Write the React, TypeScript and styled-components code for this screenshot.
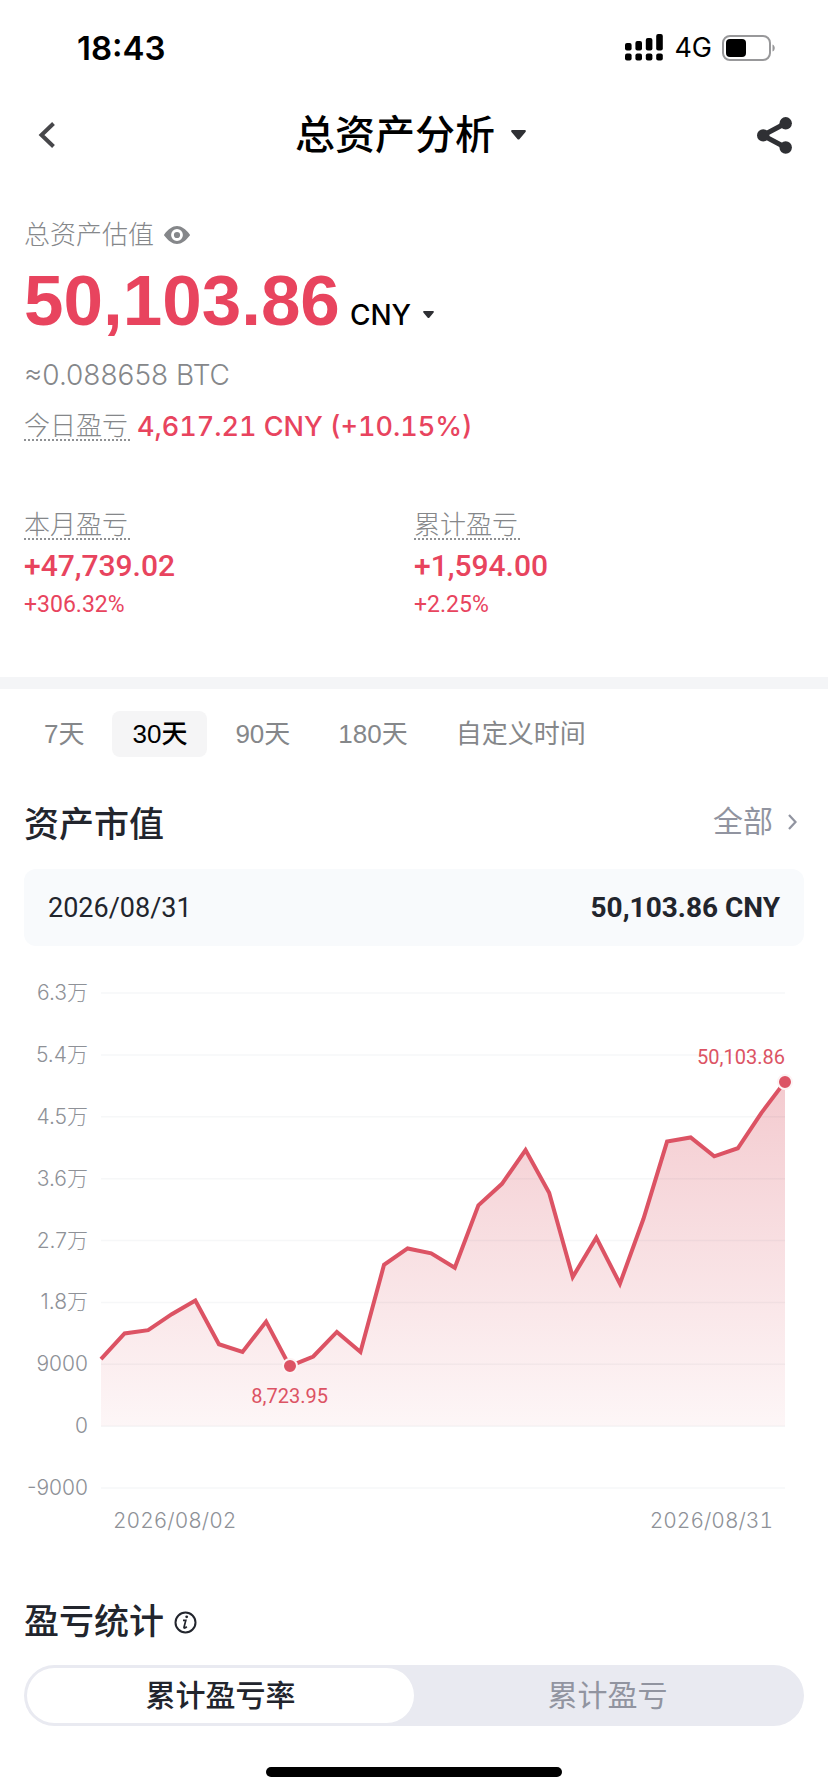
import React from "react";
import styled, { createGlobalStyle, css } from "styled-components";

const cjk = `"Noto Sans CJK SC", sans-serif`;
const sans = `"Liberation Sans", ${cjk}`;
const inter = `Inter, ${cjk}`;
const roboto = `Roboto, ${cjk}`;

const color = {
  text: "#22252d",
  muted: "#85878a",
  axis: "#8e9197",
  red: "#e8445e",
  line: "#dc5364",
};

const GlobalStyle = createGlobalStyle`
  * { box-sizing: border-box; }
  body { margin: 0; background: #fff; color: ${color.text}; font-family: ${sans}; }
  button { margin: 0; padding: 0; border: 0; background: none; font: inherit; color: inherit; cursor: pointer; }
  h1, h2, p, dl, dt, dd { margin: 0; }
  svg { display: block; flex: none; }
`;

const Page = styled.div`
  display: flex;
  flex-direction: column;
  min-height: 100vh;
`;

const StatusBar = styled.header`
  display: flex;
  align-items: center;
  justify-content: space-between;
  height: 95px;
  padding: 0 52px 0 77px;
  color: #000;
  font-family: ${inter};
`;

const Clock = styled.time`
  font-size: 33px;
  font-weight: 600;
  line-height: 40px;
`;

const StatusIcons = styled.div`
  display: flex;
  align-items: center;
  gap: 10px;
  font-size: 27px;
  font-weight: 400;
  line-height: 40px;
`;

const NavBar = styled.nav`
  display: grid;
  grid-template-columns: 48px 1fr 48px;
  align-items: center;
  height: 80px;
  padding: 0 30px 0 23px;
`;

const IconButton = styled.button`
  display: flex;
  align-items: center;
  justify-content: center;
  min-height: 30px;
`;

const TitleButton = styled.button`
  display: flex;
  align-items: center;
  justify-self: center;
  gap: 16px;
`;

const Title = styled.h1`
  color: #000;
  font-size: 40px;
  font-weight: 500;
  line-height: 56px;
`;

const Summary = styled.section`
  padding: 40px 24px 57px;
`;

const Row = styled.div<{ $align?: string; $gap: number }>`
  display: flex;
  align-items: ${(p) => p.$align ?? "center"};
  gap: ${(p) => p.$gap}px;
`;

const Label = styled.p`
  color: ${color.muted};
  font-size: 26px;
  font-weight: 300;
  line-height: 40px;
`;

const dotted = css`
  border-bottom: 2px dotted #8f9194;
`;

const Total = styled.strong`
  color: ${color.red};
  font-size: 71px;
  font-weight: 700;
  line-height: 92px;
`;

const Currency = styled.button`
  display: flex;
  align-items: center;
  gap: 12px;
  color: #000;
  font-family: ${inter};
  font-size: 28px;
  font-weight: 500;
  line-height: 36px;
`;

const Btc = styled.p`
  padding-top: 8px;
  color: ${color.muted};
  font-family: ${inter};
  font-size: 28px;
  font-weight: 300;
  line-height: 40px;
`;

const Term = styled.dt`
  ${dotted}
  width: fit-content;
  padding-right: 2px;
  color: ${color.muted};
  font-size: 26px;
  font-weight: 300;
  line-height: 26px;
`;

const Today = styled.dl`
  display: flex;
  align-items: center;
  gap: 7px;
  padding-top: 12px;
`;

const TodayValue = styled.dd`
  color: ${color.red};
  font-family: ${inter};
  font-size: 27px;
  font-variant-numeric: tabular-nums;
  font-weight: 500;
  line-height: 40px;
`;

const Stats = styled.div`
  display: grid;
  grid-template-columns: 1fr 1fr;
  padding-top: 65px;
`;

const StatValue = styled.dd`
  padding-top: 4px;
  color: ${color.red};
  font-family: ${roboto};
  font-size: 30px;
  font-weight: 500;
  line-height: 44px;
`;

const StatRate = styled.dd`
  padding-top: 2px;
  color: ${color.red};
  font-family: ${roboto};
  font-size: 23px;
  line-height: 30px;
`;

const Divider = styled.hr`
  width: 100%;
  height: 12px;
  margin: 0;
  border: 0;
  background: #f4f5f7;
`;

const Ranges = styled.div`
  display: flex;
  gap: 8px;
  padding: 22px 24px 0;
`;

const RangeButton = styled.button<{ $active?: boolean }>`
  height: 46px;
  padding: 0 20px;
  border-radius: 8px;
  background: ${(p) => (p.$active ? "#f5f5f6" : "transparent")};
  color: ${(p) => (p.$active ? "#000" : color.muted)};
  font-size: 26px;
  font-weight: ${(p) => (p.$active ? 500 : 400)};
  line-height: 46px;
  white-space: nowrap;
`;

const SectionHead = styled.div`
  display: flex;
  align-items: center;
  justify-content: space-between;
  padding: 42px 24px 0;
`;

const SectionTitle = styled.h2`
  font-size: 35px;
  font-weight: 500;
  line-height: 52px;
`;

const AllLink = styled.a`
  display: flex;
  align-items: center;
  gap: 15px;
  padding: 0 7px 6px 0;
  color: #9194a0;
  font-size: 30px;
  line-height: 40px;
  text-decoration: none;
`;

const ValueCard = styled.div`
  display: flex;
  align-items: center;
  justify-content: space-between;
  height: 77px;
  margin: 18px 24px 0;
  padding: 0 24px;
  border-radius: 12px;
  background: #f8fafc;
  font-family: ${roboto};
  font-size: 27px;
  line-height: 36px;

  strong {
    font-size: 28px;
  }
`;

const Chart = styled.figure`
  display: grid;
  grid-template-columns: 64px 1fr;
  column-gap: 13px;
  margin: 47px 43px 0 24px;
`;

const YAxis = styled.div`
  display: flex;
  flex-direction: column;
  justify-content: space-between;
  height: 525px;
  margin: -15px 0;
  color: ${color.axis};
  font-family: ${inter};
  font-size: 21px;
  font-weight: 300;
  line-height: 30px;
  text-align: right;
  white-space: nowrap;
`;

const Plot = styled.div`
  position: relative;
  height: 495px;
`;

const PlotSvg = styled.svg`
  width: 100%;
  height: 100%;
  overflow: visible;
`;

const Marker = styled.span`
  position: absolute;
  width: 16px;
  height: 16px;
  border: 2px solid #fdf3f4;
  border-radius: 50%;
  background: ${color.line};
  transform: translate(-50%, -50%);
`;

const PointLabel = styled.span<{ $end?: boolean }>`
  position: absolute;
  color: ${color.line};
  font-family: ${roboto};
  font-size: 20px;
  line-height: 24px;
  transform: ${(p) => (p.$end ? "translate(-100%, -37px)" : "translate(-50%, 18px)")};
`;

const XAxis = styled.div`
  display: flex;
  grid-column: 2;
  justify-content: space-between;
  padding: 18px 12px 0;
  color: ${color.axis};
  font-family: ${inter};
  font-size: 21px;
  font-variant-numeric: tabular-nums;
  font-weight: 300;
  line-height: 30px;
`;

const StatsHead = styled(SectionHead)`
  justify-content: flex-start;
  gap: 10px;
  padding-top: 60px;
`;

const Segmented = styled.div`
  display: grid;
  grid-template-columns: 1fr 1fr;
  height: 61px;
  margin: 17px 24px 0;
  padding: 3px;
  border-radius: 31px;
  background: #e9eaf1;
`;

const Segment = styled.button<{ $active?: boolean }>`
  border-radius: 28px;
  background: ${(p) => (p.$active ? "#fff" : "transparent")};
  color: ${(p) => (p.$active ? color.text : "#9194a0")};
  font-size: 30px;
  font-weight: ${(p) => (p.$active ? 500 : 400)};
  line-height: 44px;
`;

const HomeBar = styled.div`
  width: 296px;
  height: 10px;
  margin: auto auto 15px;
  border-radius: 5px;
  background: #000;
`;

const SignalIcon = () => (
  <svg width="39" height="28" viewBox="0 0 39 28" aria-hidden="true">
    {[9, 7, 4, 0].map((top, i) => (
      <g key={top}>
        <rect x={i * 10.4} y={top} width="6.6" height={16.5 - top} rx="2" />
        <rect x={i * 10.4} y="19.5" width="6.6" height="7" rx="2" />
      </g>
    ))}
  </svg>
);

const BatteryIcon = () => (
  <svg width="54" height="26" viewBox="0 0 54 26" aria-hidden="true">
    <rect x="1" y="1" width="47" height="24" rx="7" fill="none" stroke="#98989a" strokeWidth="2" />
    <rect x="4" y="4" width="20" height="18" rx="4" />
    <path d="M50.5 9.5c3 1 3 6 0 7z" fill="#98989a" />
  </svg>
);

const Caret = ({ width }: { width: number }) => (
  <svg width={width} height={width * 0.66} viewBox="0 0 15 10" aria-hidden="true">
    <path d="M1.2 0h12.6c1 0 1.5 1.1.8 1.9L8.6 9.2c-.6.7-1.6.7-2.2 0L.4 1.9C-.3 1.1.2 0 1.2 0z" fill="#2f3034" />
  </svg>
);

const BackIcon = () => (
  <svg width="18" height="26" viewBox="0 0 18 26" fill="none" stroke="#47474a" strokeWidth="4" aria-hidden="true">
    <path d="M15.5 1.500 3.500 13l12 11.500" />
  </svg>
);

const ShareIcon = () => (
  <svg width="35" height="37" viewBox="0 0 35 37" fill="#2f3034" aria-hidden="true">
    <path d="M28.7 6.3 6 18.4l22.7 12.1" fill="none" stroke="#2f3034" strokeWidth="5" />
    <circle cx="6.2" cy="18.4" r="6.2" />
    <circle cx="28.7" cy="6.3" r="6.2" />
    <circle cx="28.7" cy="30.5" r="6.2" />
  </svg>
);

const EyeIcon = () => (
  <svg width="26" height="18" viewBox="0 0 26 18" aria-hidden="true">
    <path
      d="M.4 8.2C4.5 3 8.5 0 13 0s8.500 3 12.600 8.200c.5.6.5 1 0 1.600C21.500 15 17.500 18 13 18S4.500 15 .4 9.800c-.5-.6-.5-1 0-1.600z"
      fill="#85878a"
    />
    <circle cx="13" cy="9" r="4.5" fill="#85878a" stroke="#fff" strokeWidth="2.8" />
  </svg>
);

const InfoIcon = () => (
  <svg width="23" height="23" viewBox="0 0 23 23" fill="none" stroke="#22252d" aria-hidden="true">
    <circle cx="11.5" cy="11.5" r="10" strokeWidth="2" />
    <path d="M9 9.4h2.800L10 16.200c-.3 1.200.9 1.200 2.800-.6" strokeWidth="1.7" />
    <circle cx="12.7" cy="5.8" r="1.4" fill="#22252d" stroke="none" />
  </svg>
);

const ChevronRight = () => (
  <svg width="9" height="16" viewBox="0 0 9 16" fill="none" stroke="#9194a0" strokeWidth="2.2" aria-hidden="true">
    <path d="M1 1l6.5 7L1 15" />
  </svg>
);

const yTicks = ["6.3万", "5.4万", "4.5万", "3.6万", "2.7万", "1.8万", "9000", "0", "-9000"];

// Daily asset value, 2026/08/02 to 2026/08/31.
const values = [
  9760, 13480, 13960, 16280, 18280, 11910, 10780, 15210, 8724, 10130, 13700, 10780, 23470, 25840, 25140, 23040, 32110,
  35240, 40150, 33950, 21690, 27410, 20710, 30160, 41390, 41990, 39240, 40420, 45560, 50104,
];
const MAX = 63000;
const MIN = -9000;
const yPercent = (v: number) => ((MAX - v) / (MAX - MIN)) * 100;
const xPercent = (i: number) => (i / (values.length - 1)) * 100;
const W = 683;
const H = 495;
const points = values.map((v, i) => `${(xPercent(i) * W) / 100},${(yPercent(v) * H) / 100}`);
const zeroY = (yPercent(0) * H) / 100;
const lowIndex = values.indexOf(Math.min(...values));
const lastIndex = values.length - 1;

const AssetChart = () => (
  <Chart aria-label="资产市值">
    <YAxis>
      {yTicks.map((t) => (
        <span key={t}>{t}</span>
      ))}
    </YAxis>
    <Plot>
      <PlotSvg viewBox={`0 0 ${W} ${H}`} preserveAspectRatio="none" aria-hidden="true">
        <defs>
          <linearGradient id="area" x1="0" y1="0" x2="0" y2="1">
            <stop offset="0" stopColor="#d84a5a" stopOpacity="0.29" />
            <stop offset="1" stopColor="#d84a5a" stopOpacity="0.05" />
          </linearGradient>
        </defs>
        <path d={`M0,${zeroY} L${points.join(" L")} L${W},${zeroY} Z`} fill="url(#area)" />
        {yTicks.map((t, i) => (
          <line
            key={t}
            x1="0"
            x2={W}
            y1={(i * H) / (yTicks.length - 1)}
            y2={(i * H) / (yTicks.length - 1)}
            stroke="#1e2850"
            strokeOpacity="0.04"
            strokeWidth="1.5"
          />
        ))}
        <polyline
          points={points.join(" ")}
          fill="none"
          stroke={color.line}
          strokeWidth="4"
          vectorEffect="non-scaling-stroke"
        />
      </PlotSvg>
      <Marker style={{ left: `${xPercent(lowIndex)}%`, top: `${yPercent(values[lowIndex])}%` }} />
      <PointLabel style={{ left: `${xPercent(lowIndex)}%`, top: `${yPercent(values[lowIndex])}%` }}>8,723.95</PointLabel>
      <Marker style={{ left: "100%", top: `${yPercent(values[lastIndex])}%` }} />
      <PointLabel $end style={{ left: "100%", top: `${yPercent(values[lastIndex])}%` }}>
        50,103.86
      </PointLabel>
    </Plot>
    <XAxis>
      <time>2026/08/02</time>
      <time>2026/08/31</time>
    </XAxis>
  </Chart>
);

const Stat = ({ name, value, rate }: { name: string; value: string; rate: string }) => (
  <dl>
    <Term>{name}</Term>
    <StatValue>{value}</StatValue>
    <StatRate>{rate}</StatRate>
  </dl>
);

export default function App() {
  const [range, setRange] = React.useState("30天");
  const [segment, setSegment] = React.useState("累计盈亏率");
  return (
    <Page>
      <GlobalStyle />
      <StatusBar>
        <Clock>18:43</Clock>
        <StatusIcons>
          <SignalIcon />
          <span>4G</span>
          <BatteryIcon />
        </StatusIcons>
      </StatusBar>
      <NavBar>
        <IconButton aria-label="返回">
          <BackIcon />
        </IconButton>
        <TitleButton>
          <Title>总资产分析</Title>
          <Caret width={15} />
        </TitleButton>
        <IconButton aria-label="分享">
          <ShareIcon />
        </IconButton>
      </NavBar>
      <Summary>
        <Row $gap={10}>
          <Label>总资产估值</Label>
          <IconButton aria-label="隐藏金额">
            <EyeIcon />
          </IconButton>
        </Row>
        <Row $gap={10} $align="baseline">
          <Total>50,103.86</Total>
          <Currency>
            CNY
            <Caret width={11} />
          </Currency>
        </Row>
        <Btc>≈0.088658 BTC</Btc>
        <Today>
          <Term>今日盈亏</Term>
          <TodayValue>4,617.21 CNY (+10.15%)</TodayValue>
        </Today>
        <Stats>
          <Stat name="本月盈亏" value="+47,739.02" rate="+306.32%" />
          <Stat name="累计盈亏" value="+1,594.00" rate="+2.25%" />
        </Stats>
      </Summary>
      <Divider />
      <Ranges>
        {["7天", "30天", "90天", "180天", "自定义时间"].map((r) => (
          <RangeButton key={r} $active={r === range} aria-pressed={r === range} onClick={() => setRange(r)}>
            {r}
          </RangeButton>
        ))}
      </Ranges>
      <SectionHead>
        <SectionTitle>资产市值</SectionTitle>
        <AllLink href="#all">
          全部
          <ChevronRight />
        </AllLink>
      </SectionHead>
      <ValueCard>
        <time>2026/08/31</time>
        <strong>50,103.86 CNY</strong>
      </ValueCard>
      <AssetChart />
      <StatsHead>
        <SectionTitle>盈亏统计</SectionTitle>
        <IconButton aria-label="说明">
          <InfoIcon />
        </IconButton>
      </StatsHead>
      <Segmented>
        {["累计盈亏率", "累计盈亏"].map((s) => (
          <Segment key={s} $active={s === segment} aria-pressed={s === segment} onClick={() => setSegment(s)}>
            {s}
          </Segment>
        ))}
      </Segmented>
      <HomeBar />
    </Page>
  );
}
